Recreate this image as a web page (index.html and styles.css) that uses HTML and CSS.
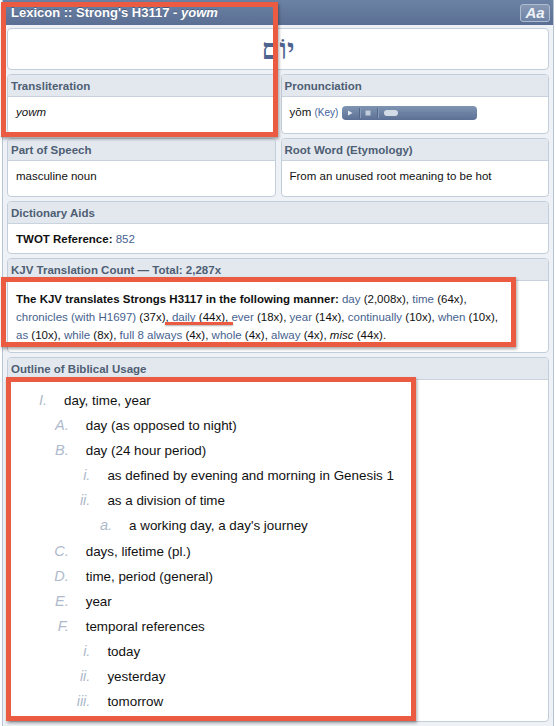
FILE: index.html
```html
<!DOCTYPE html>
<html lang="en">
<head>
<meta charset="utf-8">
<title>Lexicon :: Strong's H3117 - yowm</title>
<link rel="stylesheet" href="styles.css">
</head>
<body>
<div class="panel">
  <div class="titlebar">
    <h1 class="title">Lexicon :: Strong's H3117 - <i>yowm</i></h1>
    <span class="fontbtn">Aa</span>
  </div>
  <div class="content">
    <div class="hebrew">יוֹם</div>

    <div class="row2">
      <section class="box">
        <h2 class="box-head">Transliteration</h2>
        <div class="box-body tall"><i>yowm</i></div>
      </section>
      <section class="box">
        <h2 class="box-head">Pronunciation</h2>
        <div class="box-body tall">yōm <a class="key">(Key)</a>
          <svg class="player" width="135" height="14" viewBox="0 0 135 14">
            <defs>
              <linearGradient id="pg" x1="0" y1="0" x2="0" y2="1">
                <stop offset="0" stop-color="#8094b2"/>
                <stop offset="1" stop-color="#5b7094"/>
              </linearGradient>
            </defs>
            <rect x="0" y="0" width="135" height="14" rx="4" fill="url(#pg)"/>
            <polygon points="6,4.5 10.5,7 6,9.5" fill="#e6ebf2"/>
            <rect x="17" y="2" width="1" height="10" fill="#52668a"/>
            <rect x="18" y="2" width="1" height="10" fill="#8a9dba"/>
            <rect x="23.5" y="4.5" width="5" height="5" fill="#c2ccdb"/>
            <rect x="35" y="2" width="1" height="10" fill="#52668a"/>
            <rect x="36" y="2" width="1" height="10" fill="#8a9dba"/>
            <rect x="55" y="6" width="74" height="2" rx="1" fill="#6a7fa2"/>
            <rect x="42" y="4" width="14" height="6" rx="3" fill="#d3dbe6"/>
          </svg>
        </div>
      </section>
    </div>

    <div class="row2">
      <section class="box">
        <h2 class="box-head">Part of Speech</h2>
        <div class="box-body tall">masculine noun</div>
      </section>
      <section class="box">
        <h2 class="box-head">Root Word (Etymology)</h2>
        <div class="box-body tall">From an unused root meaning to be hot</div>
      </section>
    </div>

    <section class="box">
      <h2 class="box-head">Dictionary Aids</h2>
      <div class="box-body"><b>TWOT Reference:</b> <a>852</a></div>
    </section>

    <section class="box">
      <h2 class="box-head">KJV Translation Count — Total: 2,287x</h2>
      <div class="box-body kjv"><p><b>The KJV translates Strongs H3117 in the following manner:</b> <a>day</a> (2,008x), <a>time</a> (64x), <a>chronicles (with H1697)</a> (37x), <a>daily</a> (44x), <a>ever</a> (18x), <a>year</a> (14x), <a>continually</a> (10x), <a>when</a> (10x), <a>as</a> (10x), <a>while</a> (8x), <a>full 8 always</a> (4x), <a>whole</a> (4x), <a>alway</a> (4x), <i>misc</i> (44x).</p></div>
    </section>

    <section class="box">
      <h2 class="box-head">Outline of Biblical Usage</h2>
      <div class="box-body outline-body">
        <ol class="outline">
          <li><div class="item"><span class="num">I.</span><span>day, time, year</span></div>
            <ol>
              <li><div class="item"><span class="num">A.</span><span>day (as opposed to night)</span></div></li>
              <li><div class="item"><span class="num">B.</span><span>day (24 hour period)</span></div>
                <ol>
                  <li><div class="item"><span class="num">i.</span><span>as defined by evening and morning in Genesis 1</span></div></li>
                  <li><div class="item"><span class="num">ii.</span><span>as a division of time</span></div>
                    <ol>
                      <li><div class="item"><span class="num">a.</span><span>a working day, a day's journey</span></div></li>
                    </ol>
                  </li>
                </ol>
              </li>
              <li><div class="item"><span class="num">C.</span><span>days, lifetime (pl.)</span></div></li>
              <li><div class="item"><span class="num">D.</span><span>time, period (general)</span></div></li>
              <li><div class="item"><span class="num">E.</span><span>year</span></div></li>
              <li><div class="item"><span class="num">F.</span><span>temporal references</span></div>
                <ol>
                  <li><div class="item"><span class="num">i.</span><span>today</span></div></li>
                  <li><div class="item"><span class="num">ii.</span><span>yesterday</span></div></li>
                  <li><div class="item"><span class="num">iii.</span><span>tomorrow</span></div></li>
                </ol>
              </li>
            </ol>
          </li>
        </ol>
      </div>
    </section>
  </div>
</div>

<div class="mark mark-1"></div>
<div class="mark mark-2"></div>
<div class="mark mark-3"></div>
<div class="mark-line"></div>
</body>
</html>
```

FILE: styles.css
```css
* { box-sizing: border-box; }

html, body {
  margin: 0;
  padding: 0;
  background: #ffffff;
}

body {
  font-family: "Liberation Sans", Arial, Helvetica, sans-serif;
  color: #111;
  width: 556px;
  height: 726px;
  overflow: hidden;
  position: relative;
}

.panel {
  margin: 0 2px;
  border: 1px solid #b8c4d3;
  border-top: 0;
  background: #eef1f5;
}

.titlebar {
  height: 25px;
  background: linear-gradient(#6c82a5, #5a6f93);
  display: flex;
  align-items: center;
  justify-content: space-between;
  padding: 0 3px 0 8px;
}

.title {
  margin: 0;
  font-size: 13px;
  font-weight: bold;
  color: #fff;
  text-shadow: 0 -1px 0 rgba(40, 55, 80, 0.5);
}

.fontbtn {
  width: 30px;
  height: 18px;
  border: 1px solid #aebcd0;
  border-radius: 3px;
  background: linear-gradient(#8798b4, #6e83a5);
  color: #eef2f7;
  font-weight: bold;
  font-style: italic;
  font-size: 15px;
  line-height: 16px;
  text-align: center;
}

.content {
  padding: 3px 4px 4px;
  display: flex;
  flex-direction: column;
  gap: 4px;
}

.hebrew {
  height: 42px;
  background: #fff;
  border: 1px solid #c3cedb;
  border-radius: 4px;
  text-align: center;
  font-family: "Liberation Serif", "DejaVu Sans", serif;
  font-weight: bold;
  font-size: 29px;
  line-height: 40px;
  color: #4f6591;
}

.row2 {
  display: grid;
  grid-template-columns: 1fr 1fr;
  gap: 5px;
}

.box {
  background: #fff;
  border: 1px solid #c3cedb;
  border-radius: 4px;
  overflow: hidden;
}

.box-head {
  margin: 0;
  height: 22px;
  background: #e3e8ee;
  border-bottom: 1px solid #c9d3de;
  padding: 0 3px;
  font-size: 11.5px;
  font-weight: bold;
  line-height: 22px;
  color: #4e5e74;
}

.box-body {
  padding: 8px 8px 7px;
  font-size: 11.5px;
  line-height: 14px;
}

.box-body.tall {
  padding-bottom: 13px;
}

.box-body a {
  color: #46628f;
  text-decoration: none;
}

.key {
  font-size: 10px;
  color: #3f5f9c !important;
}

.player {
  vertical-align: -4px;
}

.kjv {
  padding: 9px 8px 8px;
  line-height: 18px;
}

.kjv p {
  margin: 0;
  max-width: 496px;
}

.outline-body {
  padding: 8px 0 7px 15px;
}

.outline,
.outline ol {
  list-style: none;
  margin: 0;
  padding: 0;
}

.outline ol {
  margin-left: 21.7px;
}

.item {
  display: flex;
  align-items: baseline;
  gap: 17px;
  height: 25.1px;
  line-height: 25.1px;
  font-size: 13.4px;
  color: #111;
}

.num {
  width: 24px;
  flex: none;
  text-align: right;
  font-style: italic;
  font-size: 14.5px;
  color: #aebacb;
}

.mark {
  position: absolute;
  border: 5px solid #eb5b42;
  box-shadow: 1px 2px 3px rgba(0, 0, 0, 0.35);
}

.mark-1 { left: 1px; top: 2px; width: 277px; height: 135px; }
.mark-2 { left: 1px; top: 277px; width: 515px; height: 70px; }
.mark-3 { left: 6px; top: 377px; width: 410px; height: 344px; }

.mark-line {
  position: absolute;
  left: 165px;
  top: 322px;
  width: 68px;
  height: 3px;
  background: #eb5b42;
  box-shadow: 0 1px 2px rgba(0, 0, 0, 0.3);
}
```
